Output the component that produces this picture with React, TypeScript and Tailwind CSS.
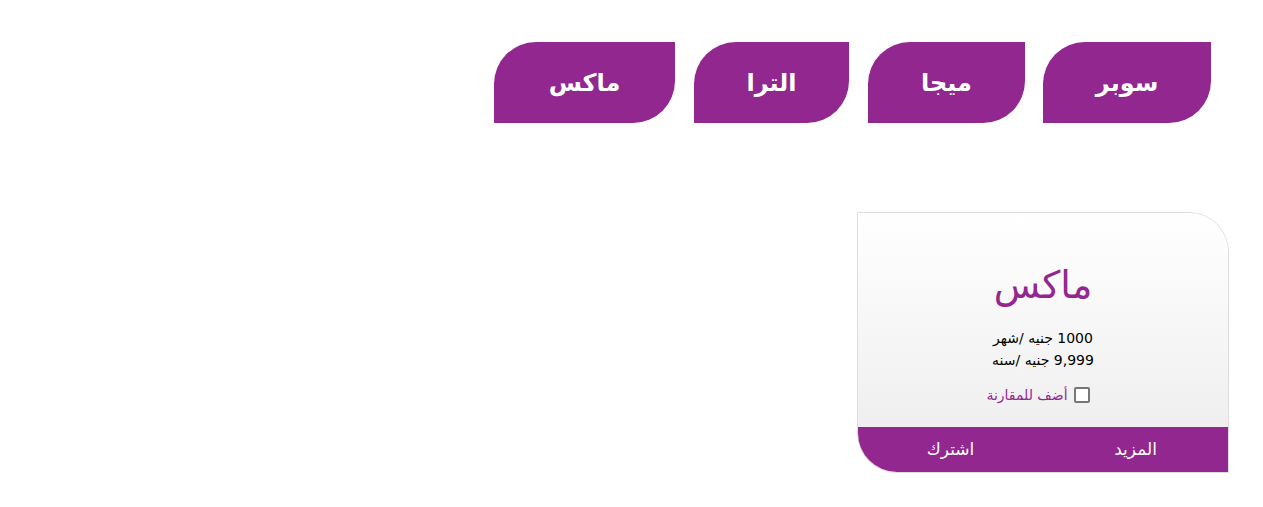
const tabs = [
	{ label: "سوبر", w: "w-[168px] -ml-px" },
	{ label: "ميجا", w: "w-[157px]" },
	{ label: "الترا", w: "w-[155px]" },
	{ label: "ماكس", w: "w-[181px]" },
]

function PlanCard() {
	return (
		<div className="w-[372px] rounded-tr-[40px] rounded-bl-[40px] border border-[#dddddd] overflow-hidden flex flex-col">
			<div className="bg-gradient-to-b from-white to-[#efefef] flex flex-col items-center pt-[49px] pb-[22px]">
				<h2 className="text-[38px] leading-[46px] text-[#92278f]">ماكس</h2>
				<div className="mt-[19px] text-[14px] leading-[22px] text-black text-center">
					<p>1000 جنيه /شهر</p>
					<p>9,999 جنيه /سنه</p>
				</div>
				<label className="mt-[14px] mr-[10px] h-[20px] flex items-center gap-[6px] text-[14px] text-[#92278f]">
					<span className="w-[16px] h-[16px] border-2 border-[#777777] rounded-[2px] bg-white" />
					<span>أضف للمقارنة</span>
				</label>
			</div>
			<div className="bg-[#92278f] h-[45px] flex text-white text-[17px]">
				<button className="flex-1 flex items-center justify-center">المزيد</button>
				<button className="flex-1 flex items-center justify-center">اشترك</button>
			</div>
		</div>
	)
}

export default function App() {
	return (
		<div dir="rtl" className="min-h-[507px] bg-white font-['DejaVu_Sans',sans-serif]">
			<div className="flex gap-[19px] pt-[42px] pr-[52px]">
				{tabs.map((t) => (
					<button
						key={t.label}
						className={`${t.w} h-[81px] bg-[#92278f] text-white text-[24px] font-bold rounded-tl-[42px] rounded-br-[42px] flex items-center justify-center`}
					>
						{t.label}
					</button>
				))}
			</div>
			<div className="flex pr-[34px] mt-[89px]">
				<PlanCard />
			</div>
		</div>
	)
}
